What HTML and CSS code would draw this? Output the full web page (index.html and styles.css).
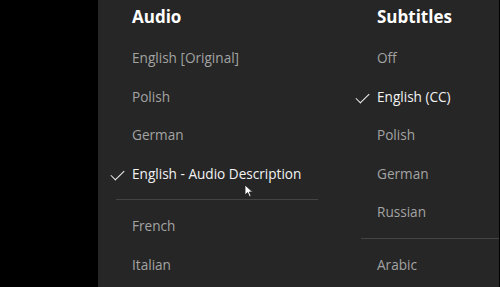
FILE: index.html
```html
<!DOCTYPE html>
<html lang="en">
<head>
  <meta charset="UTF-8">
  <title>Audio &amp; Subtitles</title>
  <link rel="stylesheet" href="styles.css">
</head>
<body>
  <div class="panel">
    <div class="track-list audio">
      <h2>Audio</h2>
      <ul>
        <li>English [Original]</li>
        <li>Polish</li>
        <li>German</li>
        <li class="selected">English - Audio Description</li>
      </ul>
      <hr>
      <ul>
        <li>French</li>
        <li>Italian</li>
      </ul>
      <svg class="cursor" width="12" height="14" viewBox="0 0 12 14">
        <path d="M1 1 L1 11 L3.6 8.6 L5.4 12.6 L7 11.9 L5.3 8 L8.6 8 Z" fill="#fff" stroke="#222" stroke-width="0.8"/>
      </svg>
    </div>
    <div class="track-list subtitles">
      <h2>Subtitles</h2>
      <ul>
        <li>Off</li>
        <li class="selected">English (CC)</li>
        <li>Polish</li>
        <li>German</li>
        <li>Russian</li>
      </ul>
      <hr>
      <ul>
        <li>Arabic</li>
      </ul>
    </div>
  </div>
</body>
</html>
```
FILE: styles.css
```css
body {
  margin: 0;
  background: #000;
  font-family: "Open Sans", "Noto Sans", sans-serif;
  overflow: hidden;
}

.panel {
  margin-left: 98px;
  width: 401px;
  height: 287px;
  background: #262626;
  display: flex;
  gap: 43px;
  padding-left: 18px;
  box-sizing: border-box;
  overflow: hidden;
}

.track-list {
  position: relative;
  flex-shrink: 0;
}

.audio {
  width: 202px;
}

.subtitles {
  width: 160px;
}

.track-list h2 {
  margin: 0 0 5px 16px;
  height: 34px;
  line-height: 34px;
  font-size: 17px;
  font-weight: 700;
  color: #fff;
}

.track-list ul {
  list-style: none;
  margin: 0;
  padding: 0;
}

.track-list li {
  height: 38.5px;
  line-height: 38.5px;
  padding-left: 16px;
  font-size: 13.6px;
  color: #a3a3a3;
  white-space: nowrap;
  position: relative;
}

.track-list li.selected {
  color: #f2f2f2;
}

.track-list li.selected::before {
  content: "";
  position: absolute;
  left: -5px;
  top: 15px;
  width: 12px;
  height: 6px;
  border-left: 1.5px solid #f2f2f2;
  border-bottom: 1.5px solid #f2f2f2;
  transform: rotate(-45deg);
}

.track-list hr {
  margin: 6px 0 7px;
  border: 0;
  height: 1px;
  background: #444;
}

.subtitles hr {
  width: 160px;
}

.cursor {
  position: absolute;
  left: 128px;
  top: 184px;
}
```
